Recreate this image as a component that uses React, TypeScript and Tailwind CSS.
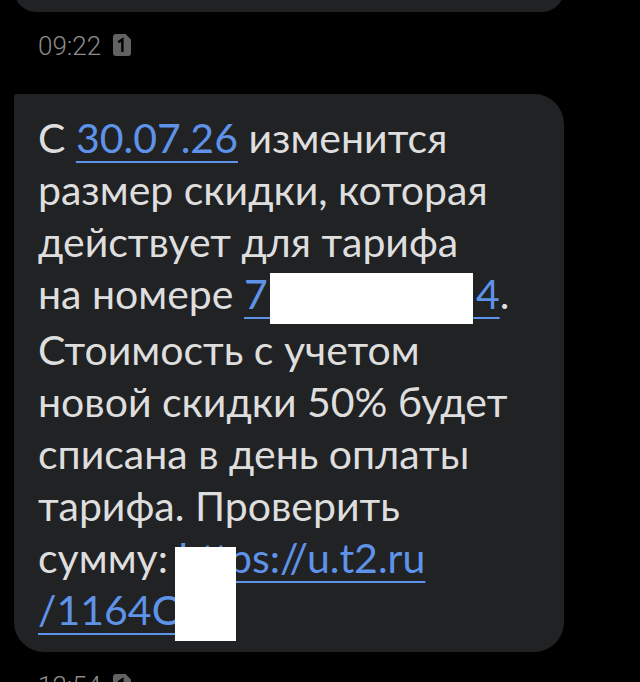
import React from "react";

interface LinkProps {
  href: string;
  children: React.ReactNode;
}

interface StampProps {
  time: string;
  sim: string;
}

const MessageLink = ({ href, children }: LinkProps) => {
  return (
    <a
      href={href}
      className="relative text-[#5f93ea] underline decoration-2 underline-offset-8 [text-decoration-skip-ink:none]"
    >
      {children}
    </a>
  );
};

const Stamp = ({ time, sim }: StampProps) => {
  return (
    <div className="flex h-[82px] shrink-0 items-start gap-3 pl-[38px] pt-5 text-[#8b8b8b]">
      <time className="font-['Roboto',sans-serif] text-[26px] font-light leading-7">{time}</time>
      <svg viewBox="0 0 18 22" className="mt-0.5 h-[22px] w-[18px]" role="img" aria-label={`SIM ${sim}`}>
        <path d="M3 0H12.5L18 5.5V19a3 3 0 0 1-3 3H3a3 3 0 0 1-3-3V3a3 3 0 0 1 3-3Z" fill="#626262" />
        <path d="M5.2 8.2 9.4 5.4V18" fill="none" stroke="#000" strokeWidth="2.4" />
      </svg>
    </div>
  );
};

const App = () => {
  return (
    <main className="flex h-screen flex-col overflow-hidden bg-black font-['Lato','Noto_Sans',sans-serif]">
      {/* end of the previous message */}
      <div className="-mt-8 ml-[14px] mr-[76px] h-11 shrink-0 rounded-[30px] bg-[#212224]" />
      <Stamp time="09:22" sim="1" />

      <article className="ml-[14px] mr-[76px] shrink-0 rounded-[30px] rounded-tl-[3px] bg-[#212224] pb-4 pl-6 pt-[18px] text-[#dedede]">
        <p className="whitespace-nowrap text-[41px] leading-[52px]">
          С <MessageLink href="#date">30.07.26</MessageLink> изменится
          <br />
          размер скидки, которая
          <br />
          действует для тарифа
          <br />
          на номере{" "}
          <MessageLink href="#phone">
            7&#8202;
            <span className="inline-block h-[51px] w-[203px] bg-white align-middle" />
            &#8202;4
          </MessageLink>
          .
          <br />
          Стоимость с учетом
          <br />
          новой скидки 50% будет
          <br />
          списана в день оплаты
          <br />
          тарифа. Проверить
          <br />
          сумму:{" "}
          <MessageLink href="#link">
            https://u.t2.ru
            <span className="absolute -left-[3px] top-[14px] z-10 h-[94px] w-[61px] bg-white" />
          </MessageLink>
          <br />
          <MessageLink href="#link">/1164O</MessageLink>
        </p>
      </article>

      <Stamp time="12:54" sim="1" />
    </main>
  );
};

export default App;
